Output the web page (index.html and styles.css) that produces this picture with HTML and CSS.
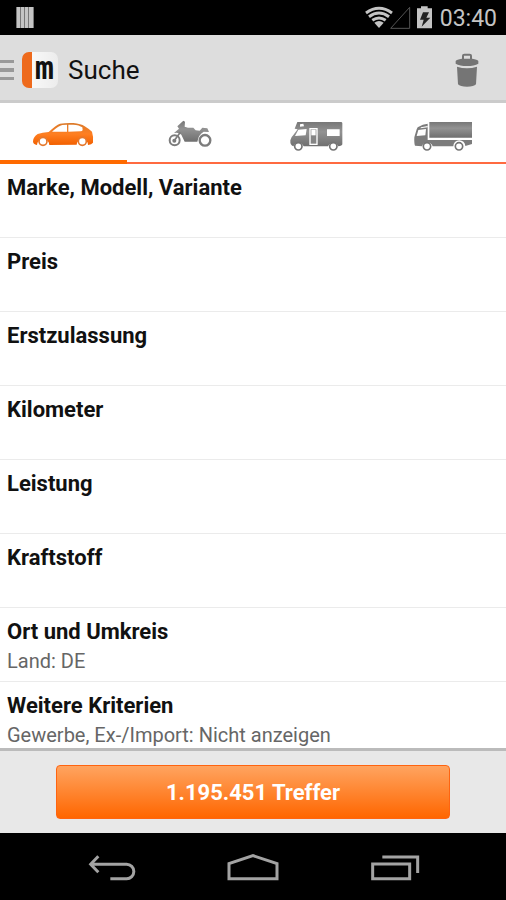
FILE: index.html
```html
<!DOCTYPE html>
<html lang="de">
<head>
<meta charset="utf-8">
<meta name="viewport" content="width=device-width, initial-scale=1">
<title>Suche</title>
<link rel="stylesheet" href="styles.css">
</head>
<body>
<div class="status">
  <svg class="status-bars" width="18" height="22" viewBox="0 0 18 22" aria-hidden="true"><path fill="#777" d="M0 0h18v21H0z"/><path fill="#c4c4c4" d="M1 0h3v21H1zM5 0h3v21H5zM9 0h3v21H9zM13 0h4v21h-4z"/></svg>
  <svg width="72" height="26" viewBox="0 0 216 78" aria-hidden="true">
    <g fill="none" stroke="#c4c4c4" stroke-width="9"><path d="M9 24Q48-4 87 24"/><path d="M18 35Q48 13 78 35"/><path d="M28 46Q48 32 68 46"/></g>
    <path fill="#c4c4c4" d="M34 53Q48 43 62 53L48 69z"/>
    <path fill="none" stroke="#555" stroke-width="3" d="M83 70L140 7V70z"/>
    <path fill="#c4c4c4" d="M174 4h20v6h13v60h-45V10h12z"/>
    <path fill="#222" d="M180 22h18l-8 16h12l-26 27 6-21h-11z"/>
  </svg>
  <span class="clock">03:40</span>
</div>
<header class="bar">
  <button class="menu" aria-label="Menü">
    <svg width="14" height="22" viewBox="0 0 14 22" aria-hidden="true"><path fill="#999" d="M0 1h14v3H0zM0 9h14v4H0zM0 18h14v3H0z"/></svg>
  </button>
  <span class="logo">m</span>
  <h1>Suche</h1>
  <button class="trash" aria-label="Löschen">
    <svg width="24" height="34" viewBox="0 0 72 102" aria-hidden="true"><path fill="none" stroke="#757575" stroke-width="6" d="M24 18V8Q24 5 28 5H44Q48 5 48 8V18"/><path fill="#757575" d="M2 32V24Q5 19 20 17H52Q67 19 70 24V32Q58 39 36 39T2 32zM6 41Q36 50 66 41L63 94Q57 101 36 101T9 94z"/></svg>
  </button>
</header>
<nav class="tabs">
  <button class="tab active" aria-label="Auto">
    <svg width="64" height="32" viewBox="93 60 192 96" aria-hidden="true">
      <defs><linearGradient id="o" x1="0" y1="0" x2="0" y2="1"><stop offset="0" stop-color="#d97a2b"/><stop offset=".5" stop-color="#ff7f22"/><stop offset="1" stop-color="#f26000"/></linearGradient></defs>
      <path fill="url(#o)" d="M99 124Q100 110 113 102Q127 97 146 96Q168 75 180 71Q198 68 220 69Q243 71 254 79Q267 87 276 95Q281 111 279 128Q275 133 264 135A17 17 0 0 0 230 134L148 135A18 18 0 0 0 111 135Q99 134 99 124z"/>
      <path fill="#fff" d="M156 95Q176 77 187 75L201 74V95zM205 74H219Q238 75 247 82L248 90Q247 94 242 94L205 95z"/>
      <g fill="#fff" stroke="#e5782c" stroke-width="5"><circle cx="129" cy="124" r="12"/><circle cx="247" cy="124" r="12"/></g>
    </svg>
  </button>
  <button class="tab" aria-label="Motorrad">
    <svg width="64" height="32" viewBox="472 60 192 96" aria-hidden="true">
      <defs><linearGradient id="g" x1="0" y1="0" x2="0" y2="1"><stop offset="0" stop-color="#777"/><stop offset=".4" stop-color="#929292"/><stop offset="1" stop-color="#6f6f6f"/></linearGradient></defs>
      <path fill="url(#g)" d="M530 79L548 62L553 65L552 80L562 83H578L585 91L597 92L605 83L620 85L625 96L609 95Q594 103 590 125H552L542 104Q534 96 520 99L535 86z"/>
      <g fill="#fff" stroke="#7c7c7c"><circle cx="522" cy="121" r="15" stroke-width="6"/><circle cx="613" cy="121" r="16" stroke-width="7"/></g>
      <path fill="none" stroke="#7c7c7c" stroke-width="5" d="M520 123L539 97"/>
      <circle fill="#7c7c7c" cx="521" cy="122" r="6"/>
    </svg>
  </button>
  <button class="tab" aria-label="Wohnmobil">
    <svg width="64" height="32" viewBox="84 60 192 96" aria-hidden="true">
      <path fill="url(#g)" d="M124 66H256Q259 67 259 70V133Q258 138 247 139A17 17 0 0 0 216 139H143A17 17 0 0 0 112 139Q102 136 103 121Q105 111 112 105L125 88L116 86z"/>
      <path fill="#fff" d="M132 73L142 71L144 79L132 80zM127 89L152 87L149 106L117 108zM160 84H185V135H160zM213 88H251V108H213z"/>
      <path fill="#858585" d="M164 88H181V131H164z"/>
      <path fill="#fff" d="M166 89H179V106H166z"/>
      <g fill="#fff" stroke="#747474" stroke-width="5"><circle cx="127" cy="139" r="11"/><circle cx="232" cy="139" r="11"/></g>
    </svg>
  </button>
  <button class="tab" aria-label="Lkw">
    <svg width="64" height="32" viewBox="464 60 192 96" aria-hidden="true">
      <path fill="url(#g)" d="M519 66H647V113H519z"/>
      <path fill="#7c7c7c" d="M484 82Q500 72 514 71V120H647V132L627 138A18 18 0 0 0 591 139H529A17 17 0 0 0 497 139L476 137Q473 130 474 112L481 88z"/>
      <path fill="#fff" d="M486 90L509 87L507 106L481 108zM494 82L514 78V82L492 85z"/>
      <g fill="#fff" stroke="#747474" stroke-width="5"><circle cx="512" cy="139" r="11"/><circle cx="608" cy="139" r="11"/></g>
    </svg>
  </button>
</nav>
<main class="list">
  <a class="row" href="#"><span class="name">Marke, Modell, Variante</span></a>
  <a class="row" href="#"><span class="name">Preis</span></a>
  <a class="row" href="#"><span class="name">Erstzulassung</span></a>
  <a class="row" href="#"><span class="name">Kilometer</span></a>
  <a class="row" href="#"><span class="name">Leistung</span></a>
  <a class="row" href="#"><span class="name">Kraftstoff</span></a>
  <a class="row" href="#"><span class="name">Ort und Umkreis</span><span class="value">Land: DE</span></a>
  <a class="row" href="#"><span class="name">Weitere Kriterien</span><span class="value">Gewerbe, Ex-/Import: Nicht anzeigen</span></a>
</main>
<footer class="footer"><button class="results">1.195.451 Treffer</button></footer>
<nav class="system">
  <button aria-label="Zurück"><svg width="48" height="28" viewBox="-5 0 144 84" aria-hidden="true"><path fill="none" stroke="#a3a3a3" stroke-width="9" d="M6 31H114A21 21 0 0 1 114 74H65M29 7L6 31L29 55"/></svg></button>
  <button aria-label="Startseite"><svg width="52" height="28" viewBox="0 0 156 84" aria-hidden="true"><path fill="none" stroke="#a3a3a3" stroke-width="9" d="M6 74V29L78 5L150 29V74z"/></svg></button>
  <button aria-label="Letzte Apps"><svg width="48" height="28" viewBox="0 0 144 84" aria-hidden="true"><path fill="none" stroke="#a3a3a3" stroke-width="9" d="M5 30H116V74H5zM34 9H140V57"/></svg></button>
</nav>
</body>
</html>
```
FILE: styles.css
```css
* { box-sizing: border-box; }
body {
  margin: 0;
  height: 100vh;
  display: flex;
  flex-direction: column;
  background: #fff;
  font-family: Roboto, "Liberation Sans", sans-serif;
  color: #111;
}
button {
  border: 0;
  padding: 0;
  background: none;
  font: inherit;
  color: inherit;
  cursor: pointer;
}
svg { display: block; overflow: visible; }

.status {
  display: flex;
  align-items: center;
  flex: none;
  height: 35px;
  padding: 0 9px 0 16px;
  background: #000;
  color: #c4c4c4;
}
.status-bars { margin-right: auto; }
.clock {
  margin-left: 5px;
  padding-top: 2px;
  font-size: 23px;
  line-height: 32px;
}

.bar {
  display: flex;
  align-items: center;
  flex: none;
  height: 68px;
  padding: 4px 27px 0 0;
  background: #ddd;
  border-bottom: 3px solid #cbcbcb;
}
.logo {
  width: 36px;
  height: 36px;
  margin: 0 10px 0 8px;
  padding-left: 9px;
  border-radius: 7px;
  background: linear-gradient(90deg, #ee6a1c 10px, #f8f8f8 10px, #ececec);
  font: bold 32px/32px "DejaVu Sans Mono", monospace;
  text-align: center;
}
h1 {
  margin: 0 auto 0 0;
  font-size: 26px;
  line-height: 36px;
  font-weight: 400;
}

.tabs {
  display: flex;
  flex: none;
  height: 61px;
  background: linear-gradient(#fff, #fff) top / 100% 59px no-repeat, #ff6a40;
}
.tab {
  flex: 1;
  display: flex;
  justify-content: center;
  padding-top: 17px;
}
.tab.active {
  border-bottom: 4px solid #ff6a00;
}

.list {
  flex: 1;
  min-height: 0;
  overflow: hidden;
}
.row {
  display: block;
  height: 74px;
  padding: 10px 7px 0;
  border-bottom: 1px solid #ebebeb;
  color: #111;
  text-decoration: none;
}
.name, .value { display: block; }
.name {
  font-size: 22px;
  line-height: 28px;
  font-weight: 700;
}
.value {
  font-size: 20px;
  line-height: 30px;
  color: #666;
}

.footer {
  flex: none;
  height: 85px;
  padding: 14px 56px;
  border-top: 3px solid #bbb;
  background: #e8e8e8;
}
.results {
  width: 100%;
  height: 54px;
  border: 1px solid #ff6410;
  border-radius: 4px;
  background: linear-gradient(#ffa460, #ff6600);
  color: #fff;
  font-size: 22px;
  font-weight: 700;
}

.system {
  display: flex;
  justify-content: center;
  align-items: center;
  gap: 92px;
  flex: none;
  height: 67px;
  padding-top: 3px;
  background: #000;
}
```
